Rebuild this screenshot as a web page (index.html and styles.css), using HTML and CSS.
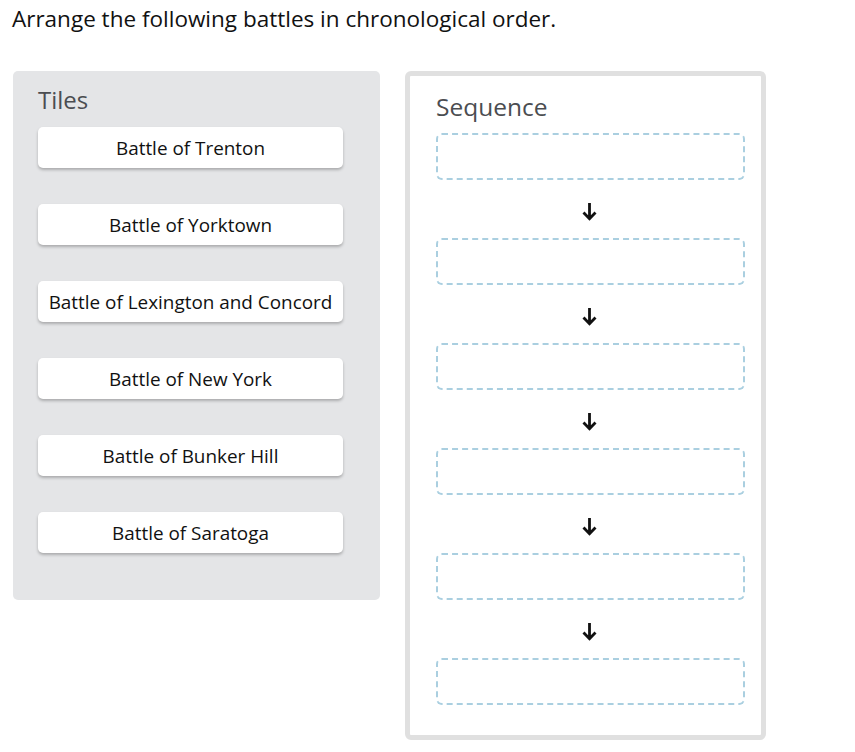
FILE: index.html
```html
<!DOCTYPE html>
<html>
<head>
<meta charset="utf-8">
<link rel="stylesheet" href="styles.css">
</head>
<body>
<p class="prompt">Arrange the following battles in chronological order.</p>
<div class="board">
  <div class="tiles">
    <h2 class="tiles-title">Tiles</h2>
    <div class="tile">Battle of Trenton</div>
    <div class="tile">Battle of Yorktown</div>
    <div class="tile">Battle of Lexington and Concord</div>
    <div class="tile">Battle of New York</div>
    <div class="tile">Battle of Bunker Hill</div>
    <div class="tile">Battle of Saratoga</div>
  </div>
  <div class="sequence">
    <h2 class="seq-title">Sequence</h2>
    <div class="slot"></div>
    <div class="arrow"><svg width="15" height="18" viewBox="0 0 15 18"><path d="M7.5 0V16M1.5 9.5L7.5 15.8L13.5 9.5" fill="none" stroke="#111" stroke-width="2.8"/></svg></div>
    <div class="slot"></div>
    <div class="arrow"><svg width="15" height="18" viewBox="0 0 15 18"><path d="M7.5 0V16M1.5 9.5L7.5 15.8L13.5 9.5" fill="none" stroke="#111" stroke-width="2.8"/></svg></div>
    <div class="slot"></div>
    <div class="arrow"><svg width="15" height="18" viewBox="0 0 15 18"><path d="M7.5 0V16M1.5 9.5L7.5 15.8L13.5 9.5" fill="none" stroke="#111" stroke-width="2.8"/></svg></div>
    <div class="slot"></div>
    <div class="arrow"><svg width="15" height="18" viewBox="0 0 15 18"><path d="M7.5 0V16M1.5 9.5L7.5 15.8L13.5 9.5" fill="none" stroke="#111" stroke-width="2.8"/></svg></div>
    <div class="slot"></div>
    <div class="arrow"><svg width="15" height="18" viewBox="0 0 15 18"><path d="M7.5 0V16M1.5 9.5L7.5 15.8L13.5 9.5" fill="none" stroke="#111" stroke-width="2.8"/></svg></div>
    <div class="slot"></div>
  </div>
</div>
</body>
</html>
```
FILE: styles.css
```css
html, body {
  margin: 0;
  padding: 0;
  background: #fff;
}
body {
  font-family: "Open Sans", "Liberation Sans", sans-serif;
  color: #111;
}
.prompt {
  margin: 0;
  padding: 3px 0 0 12px;
  font-size: 22.5px;
  line-height: 32px;
}
.board {
  display: flex;
  align-items: flex-start;
  gap: 25px;
  margin: 36px 0 0 13px;
}
.tiles {
  width: 367px;
  height: 529px;
  box-sizing: border-box;
  background: #e4e5e7;
  border-radius: 5px;
  padding: 13px 0 0 25px;
}
.tiles-title {
  margin: 0 0 11px 0;
  font-weight: 400;
  font-size: 24px;
  line-height: 32px;
  color: #4b4d51;
}
.tile {
  width: 305px;
  height: 41px;
  box-sizing: border-box;
  background: #fff;
  border-radius: 5px;
  box-shadow: 0 2px 3px rgba(0, 0, 0, 0.25);
  display: flex;
  align-items: center;
  justify-content: center;
  font-size: 18.9px;
  margin-bottom: 36px;
}
.sequence {
  width: 361px;
  height: 669px;
  box-sizing: border-box;
  border: 5px solid #e0e0e0;
  border-radius: 6px;
  background: #fff;
  padding: 14px 16px 0 26px;
}
.seq-title {
  margin: 0 0 9px 0;
  font-weight: 400;
  font-size: 24.5px;
  line-height: 34px;
  color: #4b4d51;
}
.slot {
  height: 47px;
  box-sizing: border-box;
  border: 2px dashed #aacfe0;
  border-radius: 6px;
}
.arrow {
  display: flex;
  justify-content: center;
  height: 18px;
  padding: 23px 3px 17px 0;
}
.arrow svg {
  display: block;
}
```
